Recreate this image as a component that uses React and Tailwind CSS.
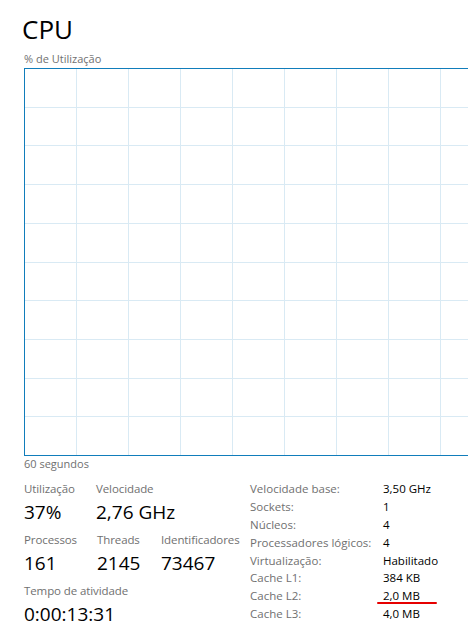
const COLS = 10;
const ROWS = 10;
const CELL_W = 52;
const CHART_W = COLS * CELL_W;
const CHART_H = 387;

const details = [
  ["Velocidade base:", "3,50 GHz"],
  ["Sockets:", "1"],
  ["Núcleos:", "4"],
  ["Processadores lógicos:", "4"],
  ["Virtualização:", "Habilitado"],
  ["Cache L1:", "384 KB"],
  ["Cache L2:", "2,0 MB", true],
  ["Cache L3:", "4,0 MB"],
];

function ChartGrid() {
  return (
    <svg width={CHART_W + 1} height={CHART_H + 1} className="block shrink-0">
      {Array.from({ length: COLS - 1 }, (_, i) => (
        <line
          key={"v" + i}
          x1={(i + 1) * CELL_W + 0.5}
          x2={(i + 1) * CELL_W + 0.5}
          y1={0}
          y2={CHART_H}
          stroke="#d9eaf4"
        />
      ))}
      {Array.from({ length: ROWS - 1 }, (_, i) => {
        const y = Math.round(((i + 1) * CHART_H) / ROWS) + 0.5;
        return (
          <line key={"h" + i} x1={0} x2={CHART_W} y1={y} y2={y} stroke="#d9eaf4" />
        );
      })}
      <rect
        x={0.5}
        y={0.5}
        width={CHART_W}
        height={CHART_H}
        fill="none"
        stroke="#117dbb"
      />
    </svg>
  );
}

function Stat({ label, value, w }) {
  return (
    <div className={w}>
      <div className="text-[11.5px] leading-[18px] text-[#707070] whitespace-nowrap tracking-[-0.1px]">{label}</div>
      <div className="text-[19px] leading-[28px] text-black whitespace-nowrap">{value}</div>
    </div>
  );
}

export default function App() {
  return (
    <div
      className="w-full h-[641px] overflow-hidden bg-white"
      style={{ fontFamily: '"Open Sans", "Noto Sans", sans-serif' }}
    >
      {/* Header */}
      <h1 className="pt-[13px] pl-[22px] text-[26px] leading-[32px] text-black font-normal">
        CPU
      </h1>
      <p className="mt-[7px] pl-[24px] text-[11px] leading-[14px] text-[#707070]">
        % de Utilização
      </p>

      {/* Chart */}
      <div className="mt-[2px] pl-[24px] flex">
        <ChartGrid />
      </div>
      <p className="mt-[1px] pl-[24px] text-[11px] leading-[14px] text-[#707070]">60 segundos</p>

      {/* Stats */}
      <div className="mt-[9px] pl-[24px] flex">
        <div className="w-[226px] shrink-0 flex flex-col gap-[5px]">
          <div className="flex">
            <Stat label="Utilização" value="37%" w="w-[72px]" />
            <Stat label="Velocidade" value="2,76 GHz" />
          </div>
          <div className="flex">
            <Stat label="Processos" value="161" w="w-[73px]" />
            <Stat label="Threads" value="2145" w="w-[64px]" />
            <Stat label="Identificadores" value="73467" />
          </div>
          <Stat label="Tempo de atividade" value="0:00:13:31" />
        </div>

        <div className="grid grid-cols-[133px_auto] auto-rows-[17.9px] text-[11.5px] leading-[18px]">
          {details.map(([k, v, mark]) => (
            <div key={k} className="contents">
              <div className="text-[#707070] whitespace-nowrap">{k}</div>
              <div className="relative text-black whitespace-nowrap">
                {v}
                {mark && (
                  <span className="absolute left-[-6px] top-[15px] w-[60px] h-[2px] rounded-full bg-[#e60000]" />
                )}
              </div>
            </div>
          ))}
        </div>
      </div>
    </div>
  );
}
